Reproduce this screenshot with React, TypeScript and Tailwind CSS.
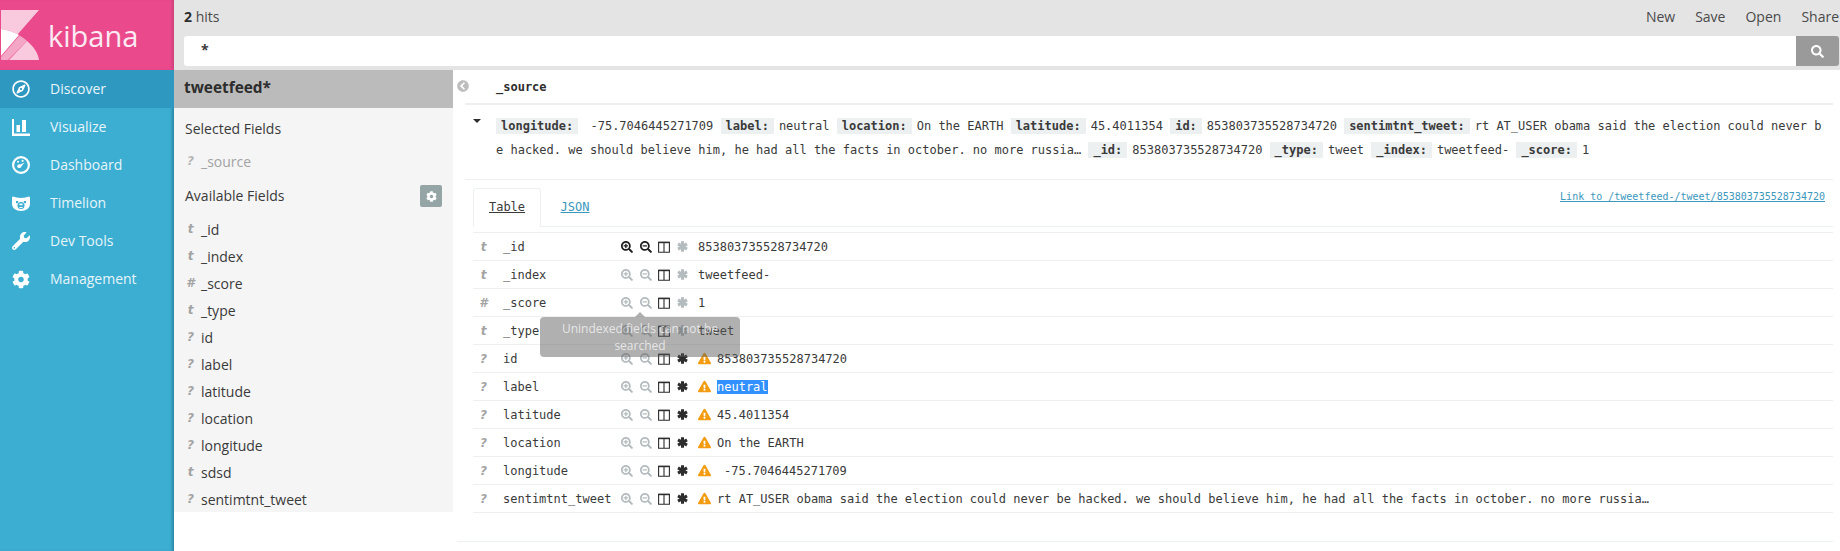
import React from "react";
import { FaSearchPlus, FaSearchMinus, FaExclamationTriangle, FaRegCompass, FaWrench, FaCog, FaChevronCircleLeft, FaSearch } from "react-icons/fa";

const sans = "[font-family:'Open_Sans',sans-serif]";

function Logo() {
  return (
    <svg width="38" height="50" viewBox="0 0 38 50" className="shrink-0">
      <path d="M0 0H38L16.5 24.5C11 21.5 6 19.5 0 19Z" fill="#f9c9dd" />
      <path d="M0 19C6 19.5 12 21.5 18 25L0 46Z" fill="#fff" />
      <path d="M18.5 25.5C21 27 24 29 26 31L7 50H0V47Z" fill="#f4a6c6" />
      <path d="M26 31C33 37 37 43 38 50H8Z" fill="#f9c9dd" />
    </svg>
  );
}

function VisualizeIcon() {
  return (
    <svg width="18" height="17" viewBox="0 0 18 17">
      <path d="M0 0H2V14.5H18V17H0Z" fill="#fff" />
      <rect x="4.5" y="6" width="3.5" height="7" fill="#fff" />
      <rect x="10" y="1" width="4" height="12" fill="#fff" />
    </svg>
  );
}

function DashboardIcon() {
  return (
    <svg width="18" height="18" viewBox="0 0 18 18">
      <circle cx="9" cy="9" r="7.9" fill="none" stroke="#fff" strokeWidth="2.2" />
      <circle cx="7.2" cy="10.2" r="1.9" fill="#fff" />
      <circle cx="6" cy="5.8" r="1" fill="#fff" />
      <circle cx="10.6" cy="4.8" r="1.1" fill="#fff" />
      <path d="M6.5 9.5L12.6 6.4L8.4 11.6Z" fill="#fff" />
    </svg>
  );
}

function TimelionIcon() {
  return (
    <svg width="18" height="15" viewBox="0 0 18 15">
      <path d="M1 0.5L4.5 1.5Q9 2.4 13.5 1.5L17 0.5Q18 0.4 18 2V8C18 12 14 15 9 15C4 15 0 12 0 8V2Q0 0.4 1 0.5Z" fill="#fff" />
      <rect x="4" y="5" width="2.2" height="2.2" fill="#3caed2" />
      <rect x="11.8" y="5" width="2.2" height="2.2" fill="#3caed2" />
      <circle cx="9" cy="9.6" r="3.5" fill="#3caed2" />
      <rect x="7.4" y="7.6" width="3.2" height="1.6" fill="#fff" />
      <rect x="7.4" y="11" width="3.2" height="1" fill="#fff" />
    </svg>
  );
}

function ColumnsIcon() {
  return (
    <svg width="12" height="12" viewBox="0 0 12 12">
      <path d="M0.6 1.2H11.4V11.2H0.6ZM6 1.2V11.2" fill="none" stroke="#2d2d2d" strokeWidth="1.1" />
      <rect x="0.6" y="0.8" width="10.8" height="1.4" fill="#2d2d2d" />
    </svg>
  );
}

function HeavyAsterisk({ color }: { color: string }) {
  return (
    <svg width="11" height="11" viewBox="0 0 11 11">
      <path d="M5.5 0.3V10.7M1 2.9L10 8.1M10 2.9L1 8.1" stroke={color} strokeWidth="3" fill="none" />
    </svg>
  );
}

const nav: { label: string; icon: React.ReactNode; active?: boolean }[] = [
  { label: "Discover", icon: <FaRegCompass size={18} color="#fff" />, active: true },
  { label: "Visualize", icon: <VisualizeIcon /> },
  { label: "Dashboard", icon: <DashboardIcon /> },
  { label: "Timelion", icon: <TimelionIcon /> },
  { label: "Dev Tools", icon: <FaWrench size={18} color="#fff" /> },
  { label: "Management", icon: <FaCog size={19} color="#fff" /> },
];

const fieldsList: [string, string][] = [
  ["t", "_id"], ["t", "_index"], ["#", "_score"], ["t", "_type"], ["?", "id"], ["?", "label"],
  ["?", "latitude"], ["?", "location"], ["?", "longitude"], ["t", "sdsd"], ["?", "sentimtnt_tweet"],
];

function TypeGlyph({ t, muted }: { t: string; muted?: boolean }) {
  return (
    <span className={`w-[17px] shrink-0 text-center font-bold italic [font-family:'DejaVu_Sans',sans-serif] text-[12px] ${muted ? "text-[#b5b5b5]" : "text-[#a3a3a3]"}`}>{t}</span>
  );
}

function FieldRow({ t, name, muted }: { t: string; name: string; muted?: boolean }) {
  return (
    <div className={`flex h-[27px] items-center pb-px pl-[8px] text-[14px] ${muted ? "text-[#a3a3a3]" : "text-[#3a3a3a]"}`}>
      <TypeGlyph t={t} muted={muted} />
      <span className="ml-[2px]">{name}</span>
    </div>
  );
}

function Sidebar() {
  return (
    <aside className={`flex h-full w-[174px] shrink-0 flex-col bg-[#3caed2] shadow-[inset_-3px_0_3px_-1px_rgba(0,0,0,0.22)] ${sans}`}>
      <div className="flex h-[70px] items-center bg-[#ea4a8c] pl-px shadow-[inset_-3px_0_3px_-1px_rgba(0,0,0,0.12)]">
        <Logo />
        <span className="ml-[9px] text-[29px] font-medium leading-none text-[#fdeaf3]">kibana</span>
      </div>
      {nav.map((n) => (
        <div key={n.label} className={`flex h-[38px] items-center pl-[12px] text-[14px] text-[#e6f5fa] ${n.active ? "bg-[#2f98c1]" : ""}`}>
          <span className="flex w-[18px] justify-center">{n.icon}</span>
          <span className="mb-[2px] ml-[20px]">{n.label}</span>
        </div>
      ))}
    </aside>
  );
}

function FieldPanel() {
  return (
    <div className={`w-[279px] shrink-0 self-start ${sans}`}>
      <div className="flex h-[38px] items-center bg-[#bbbbbb] pb-[2px] pl-[10px] text-[15.4px] font-bold text-[#2d2d2d]">tweetfeed*</div>
      <div className="h-[404px] bg-[#f5f5f5]">
        <div className="flex h-[40px] items-center pl-[11px] text-[14px] text-[#3a3a3a]">Selected Fields</div>
        <FieldRow t="?" name="_source" muted />
        <div className="flex h-[40px] items-center justify-between pl-[11px] pr-[11px] text-[14px] text-[#3a3a3a]">
          <span>Available Fields</span>
          <span className="mt-[2px] flex h-[22px] w-[22px] items-center justify-center rounded-[2px] bg-[#95a5a6]"><FaCog size={11} color="#fff" /></span>
        </div>
        <div className="pt-[1px]">
          {fieldsList.map(([t, n]) => <FieldRow key={n} t={t} name={n} />)}
        </div>
      </div>
    </div>
  );
}

function K({ children }: { children: React.ReactNode }) {
  return <span className="mr-[5px] bg-[#ecf0f1] px-[5px] py-[1px] font-bold text-[#3a3a3a]">{children}</span>;
}

type Row = { t: string; name: string; value: string; active?: boolean; warn?: boolean; sel?: boolean; pad?: boolean };
const rows: Row[] = [
  { t: "t", name: "_id", value: "853803735528734720", active: true },
  { t: "t", name: "_index", value: "tweetfeed-" },
  { t: "#", name: "_score", value: "1" },
  { t: "t", name: "_type", value: "tweet" },
  { t: "?", name: "id", value: "853803735528734720", warn: true },
  { t: "?", name: "label", value: "neutral", warn: true, sel: true },
  { t: "?", name: "latitude", value: "45.4011354", warn: true },
  { t: "?", name: "location", value: "On the EARTH", warn: true },
  { t: "?", name: "longitude", value: " -75.7046445271709", warn: true, pad: true },
  { t: "?", name: "sentimtnt_tweet", value: "rt AT_USER obama said the election could never be hacked. we should believe him, he had all the facts in october. no more russia…", warn: true },
];

function DocRow({ r }: { r: Row }) {
  const zoom = r.active ? "#1e1e1e" : "#b4bcbf";
  return (
    <div className="flex h-[28px] items-center border-b border-[#ecf0f1] pl-[2px] text-[12px] text-[#3a3a3a]">
      <TypeGlyph t={r.t} />
      <span className="ml-[11px] w-[118px] shrink-0">{r.name}</span>
      <span className="flex w-[18.5px] shrink-0"><FaSearchPlus size={12} color={zoom} /></span>
      <span className="flex w-[18.5px] shrink-0"><FaSearchMinus size={12} color={zoom} /></span>
      <span className="flex w-[18.5px] shrink-0"><ColumnsIcon /></span>
      <span className="flex w-[21.5px] shrink-0"><HeavyAsterisk color={r.warn ? "#2d2d2d" : "#b4bcbf"} /></span>
      {r.warn && <span className="flex w-[19px] shrink-0"><FaExclamationTriangle size={13} color="#f39c12" /></span>}
      <span className={r.pad ? "pl-[7px]" : ""}>
        {r.sel ? <span className="bg-[#3390ff] text-white">{r.value}</span> : r.value.trim()}
      </span>
    </div>
  );
}

function Doc() {
  return (
    <div className="relative min-w-0 flex-1 pl-[12px] pr-[7px] [font-family:'DejaVu_Sans_Mono',monospace]">
      <div className="absolute left-[4px] top-[10px]"><FaChevronCircleLeft size={12} color="#bdbdbd" /></div>
      <div className="flex h-[35px] items-center border-b-2 border-[#ecf0f1] pl-[31px] text-[12px] font-bold text-[#2d2d2d]">_source</div>
      <div className="relative h-[75px] border-b border-[#ecf0f1] pl-[31px] pr-[10px] pt-[9px] text-[12px] leading-[24px] text-[#3a3a3a] [word-break:break-all]">
        <span className="absolute left-[8px] top-[14px] h-0 w-0 border-x-[4px] border-t-[4px] border-x-transparent border-t-[#2d2d2d]" />
        <K>longitude:</K><span className="whitespace-pre"> -75.7046445271709</span> <K>label:</K>neutral <K>location:</K>On the EARTH <K>latitude:</K>45.4011354 <K>id:</K>853803735528734720 <K>sentimtnt_tweet:</K>rt AT_USER obama said the election could never be hacked. we should believe him, he had all the facts in october. no more russia… <K>_id:</K>853803735528734720 <K>_type:</K>tweet <K>_index:</K>tweetfeed- <K>_score:</K>1
      </div>
      <div className="relative ml-[8px] mt-[9px] flex h-[38px] items-end border-b border-[#ecf0f1] text-[12px]">
        <span className="-mb-px flex h-[39px] w-[68px] items-center justify-center rounded-t-[3px] border border-[#ecf0f1] border-b-white bg-white pb-[2px] text-[#3a3a3a] underline">Table</span>
        <span className="flex h-[38px] w-[68px] items-center justify-center text-[#3c97bd] underline">JSON</span>
        <a className="absolute right-[8px] top-0 text-[10px] text-[#3c97bd] underline">Link to /tweetfeed-/tweet/853803735528734720</a>
      </div>
      <div className="relative ml-[8px] mt-[5px] border-t border-[#ecf0f1]">
        {rows.map((r, i) => <DocRow key={i} r={r} />)}
        <div className={`absolute left-[67px] top-[84px] h-[40px] w-[200px] rounded-[4px] bg-[rgba(90,90,90,0.48)] px-[10px] pt-[3px] text-center text-[12px] leading-[17px] text-white/70 ${sans}`}>
          <span className="absolute -top-[5px] left-[95px] h-0 w-0 border-x-[5px] border-b-[5px] border-x-transparent border-b-[rgba(90,90,90,0.48)]" />
          Unindexed fields can not be searched
        </div>
      </div>
      <div className="-ml-[8px] mt-[28px] h-px bg-[#ecf0f1]" />
    </div>
  );
}

export default function App() {
  return (
    <div className="flex h-[551px] w-[1840px] overflow-hidden bg-white">
      <Sidebar />
      <div className="flex min-w-0 flex-1 flex-col">
        <header className={`h-[70px] shrink-0 bg-[#e4e4e4] pl-[10px] pr-px ${sans}`}>
          <div className="flex h-[36px] items-center justify-between pb-[4px] text-[14px] text-[#4a4a4a]">
            <span><b className="text-[#2d2d2d]">2</b> hits</span>
            <div className="flex gap-[20px]"><span>New</span><span>Save</span><span>Open</span><span>Share</span></div>
          </div>
          <div className="flex h-[30px] items-stretch">
            <div className="flex flex-1 items-center rounded-l-[3px] bg-white pb-[3px] pl-[17px] text-[14px] font-bold text-[#3a3a3a]">*</div>
            <div className="flex w-[43px] items-center justify-center rounded-r-[3px] bg-[#9a9a9a]"><FaSearch size={13} color="#fff" /></div>
          </div>
        </header>
        <div className="flex min-h-0 flex-1">
          <FieldPanel />
          <Doc />
        </div>
      </div>
    </div>
  );
}
